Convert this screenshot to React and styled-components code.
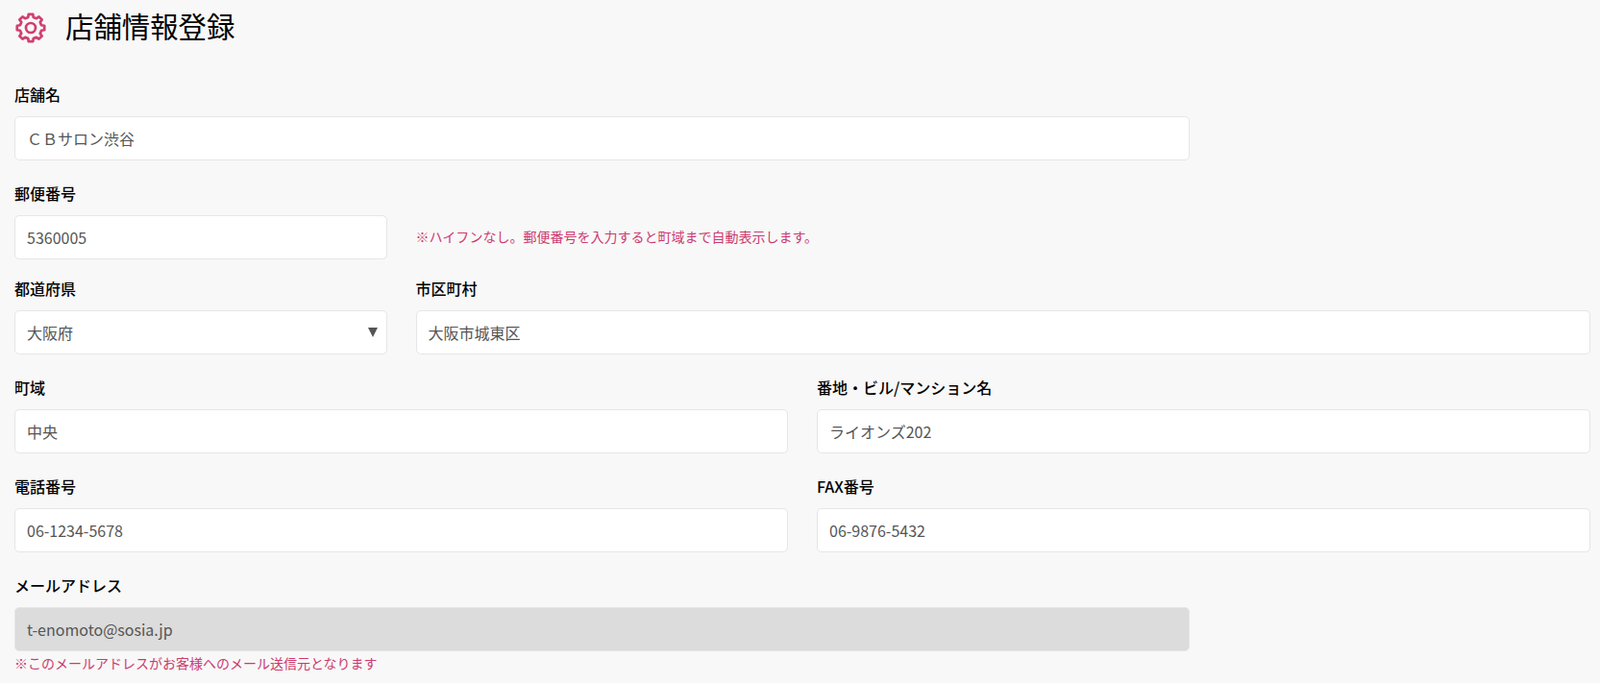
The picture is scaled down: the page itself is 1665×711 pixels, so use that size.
import React from "react";
import styled, { createGlobalStyle } from "styled-components";

const Global = createGlobalStyle`
  html, body { margin: 0; padding: 0; background: #f8f8f8; }
  body { font-family: "Noto Sans CJK JP", "Noto Sans", sans-serif; }
  * { box-sizing: border-box; }
`;

const Page = styled.main`
  width: 1665px;
  height: 711px;
  overflow: hidden;
  padding: 0 10px 0 15px;
`;

const Header = styled.header`
  display: flex;
  align-items: center;
  height: 58px;
  margin-bottom: 28px;
`;

const GearIcon = styled.svg`
  flex: none;
  width: 32px;
  height: 32px;
  margin-left: 1px;
  fill: none;
  stroke: #cf3f70;
  stroke-width: 2.7;
  stroke-linejoin: round;
`;

const Title = styled.h1`
  margin: 0 0 0 20px;
  padding-bottom: 6px;
  font-size: 29.4px;
  line-height: 52px;
  font-weight: 400;
  color: #000;
`;

const Form = styled.form`
  display: grid;
  grid-template-columns: repeat(12, 1fr);
  column-gap: 30px;
`;

const Field = styled.div`
  grid-column: span ${(p) => p.$span};
  margin-bottom: ${(p) => p.$mb ?? 22}px;
`;

const Label = styled.label`
  display: block;
  font-size: 16px;
  line-height: 24px;
  font-weight: 500;
  color: #000;
  margin-bottom: 11px;
`;

const Input = styled.input`
  display: block;
  width: 100%;
  height: 46px;
  padding: 0 12px;
  font: 400 16px/24px "Noto Sans CJK JP", "Noto Sans", sans-serif;
  color: #555;
  background: ${(p) => (p.disabled ? "#dcdcdc" : "#fff")};
  border: 1px solid #e6e6e6;
  border-radius: 5px;
  outline: none;
  opacity: 1;
  -webkit-text-fill-color: #555;
`;

const SelectBox = styled.div`
  position: relative;
`;

const Arrow = styled.span`
  position: absolute;
  right: 10px;
  top: 18px;
  width: 0;
  height: 0;
  border-left: 5px solid transparent;
  border-right: 5px solid transparent;
  border-top: 10px solid #555;
`;

const Select = styled.select`
  display: block;
  width: 100%;
  height: 46px;
  padding: 0 12px;
  appearance: none;
  font: 400 16px/24px "Noto Sans CJK JP", "Noto Sans", sans-serif;
  color: #555;
  background: #fff;
  border: 1px solid #e6e6e6;
  border-radius: 5px;
  outline: none;
`;

const Hint = styled.p`
  grid-column: span 9;
  margin: 0;
  align-self: start;
  padding-top: 45px;
  font-size: 14px;
  line-height: 24px;
  color: #cc3a6e;
`;

const Note = styled.p`
  margin: 2px 0 0;
  font-size: 14px;
  line-height: 21px;
  color: #cc3a6e;
`;

const gearPath = (() => {
  const pts = [];
  const pt = (deg, r) => {
    const a = ((deg - 90) * Math.PI) / 180;
    return `${(16 + r * Math.cos(a)).toFixed(2)} ${(16 + r * Math.sin(a)).toFixed(2)}`;
  };
  for (let i = 0; i < 8; i++) {
    const t = i * 45;
    pts.push(pt(t - 14, 11.4), pt(t - 9, 14.4), pt(t + 9, 14.4), pt(t + 14, 11.4));
  }
  return `M${pts.join("L")}Z`;
})();

const Gear = () => (
  <GearIcon viewBox="0 0 32 32">
    <path d={gearPath} />
    <circle cx="16" cy="16" r="5" />
  </GearIcon>
);

export default function App() {
  return (
    <Page>
      <Global />
      <Header>
        <Gear />
        <Title>店舗情報登録</Title>
      </Header>
      <Form>
        <Field $span={9}>
          <Label>店舗名</Label>
          <Input defaultValue="ＣＢサロン渋谷" />
        </Field>
        <Field $span={3} />
        <Field $span={3} $mb={18}>
          <Label>郵便番号</Label>
          <Input defaultValue="5360005" />
        </Field>
        <Hint>※ハイフンなし。郵便番号を入力すると町域まで自動表示します。</Hint>
        <Field $span={3}>
          <Label>都道府県</Label>
          <SelectBox>
            <Select defaultValue="大阪府">
              <option>大阪府</option>
            </Select>
            <Arrow />
          </SelectBox>
        </Field>
        <Field $span={9}>
          <Label>市区町村</Label>
          <Input defaultValue="大阪市城東区" />
        </Field>
        <Field $span={6}>
          <Label>町域</Label>
          <Input defaultValue="中央" />
        </Field>
        <Field $span={6}>
          <Label>番地・ビル/マンション名</Label>
          <Input defaultValue="ライオンズ202" />
        </Field>
        <Field $span={6}>
          <Label>電話番号</Label>
          <Input defaultValue="06-1234-5678" />
        </Field>
        <Field $span={6}>
          <Label>FAX番号</Label>
          <Input defaultValue="06-9876-5432" />
        </Field>
        <Field $span={9}>
          <Label>メールアドレス</Label>
          <Input disabled defaultValue="t-enomoto@sosia.jp" />
          <Note>※このメールアドレスがお客様へのメール送信元となります</Note>
        </Field>
      </Form>
    </Page>
  );
}
